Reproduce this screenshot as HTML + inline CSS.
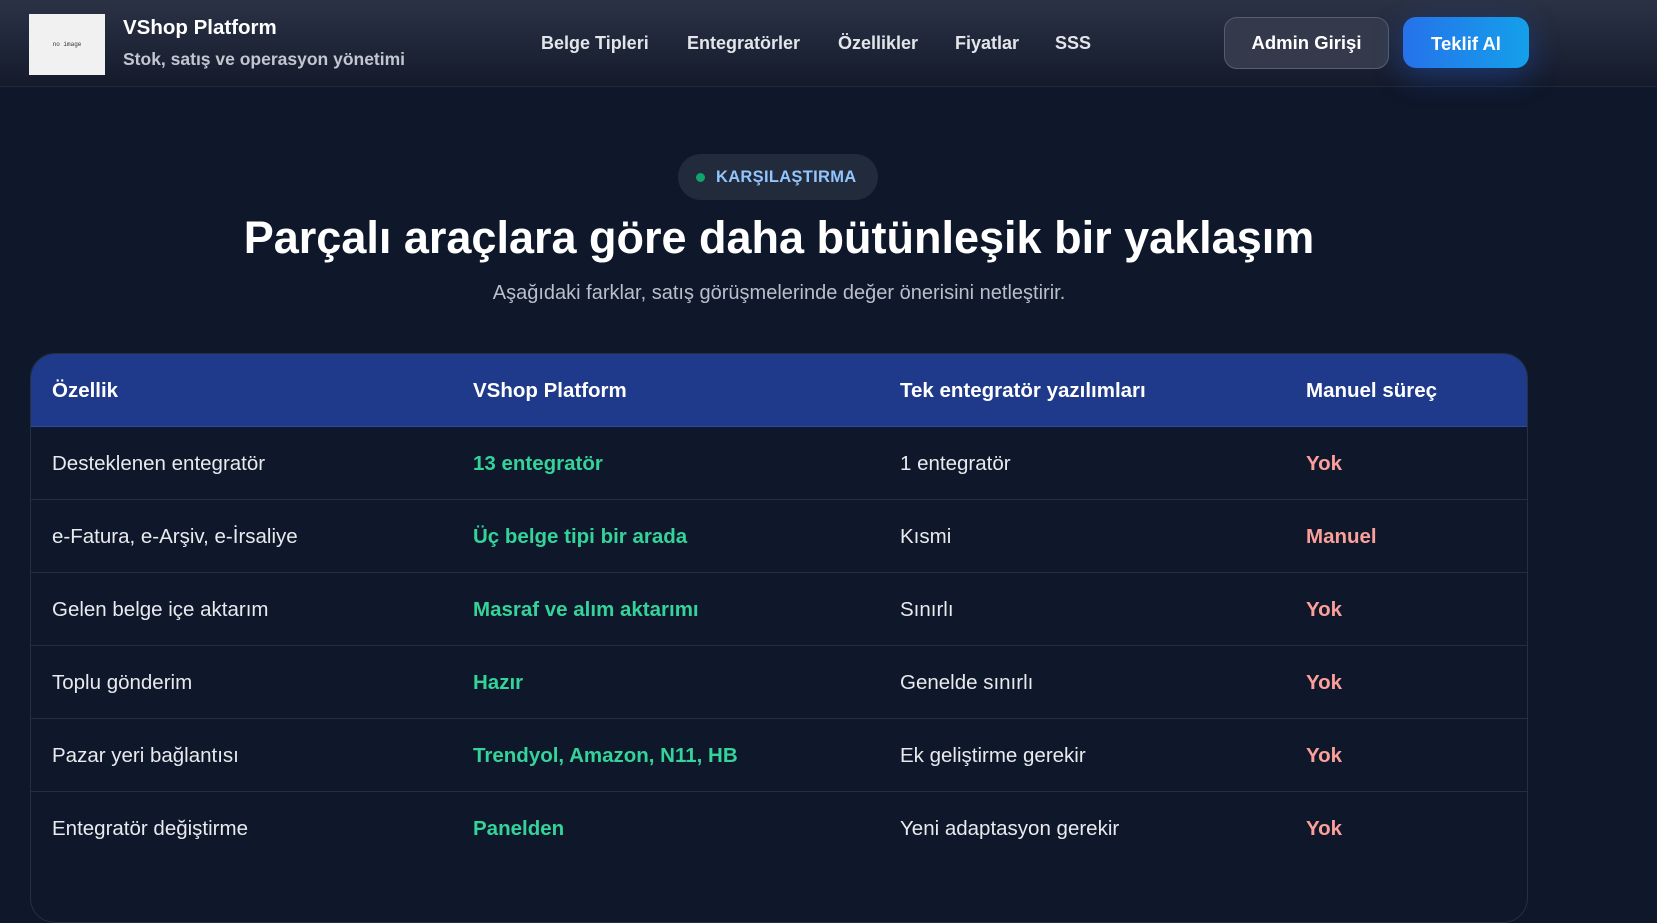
<!DOCTYPE html>
<html><head><meta charset="utf-8"><style>
*{margin:0;padding:0;box-sizing:border-box}
body{width:1657px;height:856px;overflow:hidden;background:#0f172a;font-family:"Liberation Sans",sans-serif;color:#fff;position:relative}
.nav{position:absolute;left:0;top:0;width:1657px;height:87px;background:linear-gradient(#2b3245,#1b2234 70%,#141a2b);border-bottom:1px solid #1f2a3a}
.logo{position:absolute;left:29px;top:14px;width:76px;height:61px;background:#f1f1f1;color:#333;font-size:6px;text-align:center;line-height:61px;font-family:"Liberation Mono",monospace}
.t1{position:absolute;left:123px;top:16px;font-size:20.5px;font-weight:bold}
.t2{position:absolute;left:123px;top:49px;font-size:17.5px;font-weight:bold;color:#c2c6cf}
.menu{position:absolute;top:33px;font-size:18px;color:#e2e5ea;font-weight:bold}
.b1{position:absolute;left:1224px;top:17px;width:165px;height:52px;border:1px solid #565d6e;border-radius:13px;background:#343a4b;text-align:center;line-height:50px;font-weight:bold;font-size:18.5px}
.b2{position:absolute;left:1403px;top:17px;width:126px;height:51px;border-radius:13px;background:linear-gradient(90deg,#2672ea,#14a0ea);text-align:center;line-height:54px;font-weight:bold;font-size:18.5px;box-shadow:0 8px 30px rgba(37,99,235,.35)}
.pill{position:absolute;left:678px;top:154px;width:200px;height:46px;border-radius:23px;background:#222b3b;font-size:16.5px;font-weight:bold;color:#93c5fd;line-height:46px;padding-left:38px;letter-spacing:.3px}
.pill:before{content:"";position:absolute;left:18px;top:19px;width:9px;height:9px;border-radius:50%;background:#10a36d}
h1{position:absolute;left:0;width:1558px;top:212px;text-align:center;font-size:45px;font-weight:bold}
.sub{position:absolute;left:0;width:1558px;top:282px;text-align:center;font-size:20px;color:#b9bfcb}
.tbl{position:absolute;left:30px;top:353px;width:1498px;height:570px;border:1px solid #263043;border-radius:25px;overflow:hidden}
.hd{height:73px;background:#1f3a8b;border-bottom:1px solid #2d4aa0;position:relative}
.row{height:73px;border-bottom:1px solid #242e40;position:relative}
.c{position:absolute;top:0;line-height:73px;font-size:20.5px}
.hd .c{font-weight:bold}
.g{color:#34d399;font-weight:bold}.r{color:#fb9f9a;font-weight:bold}.w{color:#e8eaee}
</style></head><body>
<div class="nav">
<div class="logo">no image</div>
<div class="t1">VShop Platform</div>
<div class="t2">Stok, satış ve operasyon yönetimi</div>
<div class="menu" style="left:541px">Belge Tipleri</div>
<div class="menu" style="left:687px">Entegratörler</div>
<div class="menu" style="left:838px">Özellikler</div>
<div class="menu" style="left:955px">Fiyatlar</div>
<div class="menu" style="left:1055px">SSS</div>
<div class="b1">Admin Girişi</div>
<div class="b2">Teklif Al</div>
</div>
<div class="pill">KARŞILAŞTIRMA</div>
<h1>Parçalı araçlara göre daha bütünleşik bir yaklaşım</h1>
<div class="sub">Aşağıdaki farklar, satış görüşmelerinde değer önerisini netleştirir.</div>
<div class="tbl">
<div class="hd"><div class="c" style="left:21px">Özellik</div><div class="c" style="left:442px">VShop Platform</div><div class="c" style="left:869px">Tek entegratör yazılımları</div><div class="c" style="left:1275px">Manuel süreç</div></div>
<div class="row"><div class="c w" style="left:21px">Desteklenen entegratör</div><div class="c g" style="left:442px">13 entegratör</div><div class="c w" style="left:869px">1 entegratör</div><div class="c r" style="left:1275px">Yok</div></div>
<div class="row"><div class="c w" style="left:21px">e-Fatura, e-Arşiv, e-İrsaliye</div><div class="c g" style="left:442px">Üç belge tipi bir arada</div><div class="c w" style="left:869px">Kısmi</div><div class="c r" style="left:1275px">Manuel</div></div>
<div class="row"><div class="c w" style="left:21px">Gelen belge içe aktarım</div><div class="c g" style="left:442px">Masraf ve alım aktarımı</div><div class="c w" style="left:869px">Sınırlı</div><div class="c r" style="left:1275px">Yok</div></div>
<div class="row"><div class="c w" style="left:21px">Toplu gönderim</div><div class="c g" style="left:442px">Hazır</div><div class="c w" style="left:869px">Genelde sınırlı</div><div class="c r" style="left:1275px">Yok</div></div>
<div class="row"><div class="c w" style="left:21px">Pazar yeri bağlantısı</div><div class="c g" style="left:442px">Trendyol, Amazon, N11, HB</div><div class="c w" style="left:869px">Ek geliştirme gerekir</div><div class="c r" style="left:1275px">Yok</div></div>
<div class="row" style="border:0"><div class="c w" style="left:21px">Entegratör değiştirme</div><div class="c g" style="left:442px">Panelden</div><div class="c w" style="left:869px">Yeni adaptasyon gerekir</div><div class="c r" style="left:1275px">Yok</div></div>
</div>
</body></html>
